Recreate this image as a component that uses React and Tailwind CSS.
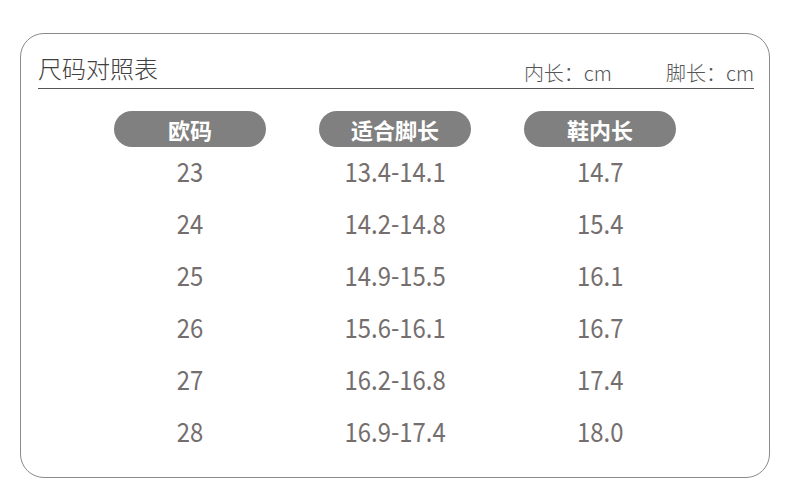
import React from "react";

const rows = [
  ["23", "13.4-14.1", "14.7"],
  ["24", "14.2-14.8", "15.4"],
  ["25", "14.9-15.5", "16.1"],
  ["26", "15.6-16.1", "16.7"],
  ["27", "16.2-16.8", "17.4"],
  ["28", "16.9-17.4", "18.0"],
];

const heads = ["欧码", "适合脚长", "鞋内长"];

export default function App() {
  return (
    <div
      className="w-[790px] h-[478px] bg-white overflow-hidden pt-[33px] pl-[20px]"
      style={{ fontFamily: '"Noto Sans CJK SC", "Noto Sans", sans-serif' }}
    >
      <div className="w-[750px] h-[445px] border border-[#8a8a8a] rounded-[24px] pl-[17px] pr-[15px]">
        <div className="h-[55px] flex justify-between border-b border-[#555]">
          <div className="self-end mb-[8px] text-[24px] leading-[24px] font-light text-[#404040]">
            尺码对照表
          </div>
          <div className="self-end mb-[5px] flex gap-[54px] text-[20px] leading-[20px] font-light text-[#555]">
            <span>内长：cm</span>
            <span>脚长：cm</span>
          </div>
        </div>
        <div className="ml-[76px] mt-[22px] grid grid-cols-[152px_152px_152px] gap-x-[53px]">
          {heads.map((h, i) => (
            <div key={i} className="flex flex-col items-center">
              <div className="w-[152px] h-[36px] rounded-full bg-[#808080] flex items-center justify-center text-white font-bold text-[22px] leading-[22px]">
                {h}
              </div>
              <div className="-mt-[3px] flex flex-col items-center">
                {rows.map((r, j) => (
                  <div key={j} className="h-[52px] flex items-center justify-center">
                    <span className="inline-block scale-x-[0.885] text-[27px] leading-[27px] text-[#756e6e]">
                      {r[i]}
                    </span>
                  </div>
                ))}
              </div>
            </div>
          ))}
        </div>
      </div>
    </div>
  );
}
